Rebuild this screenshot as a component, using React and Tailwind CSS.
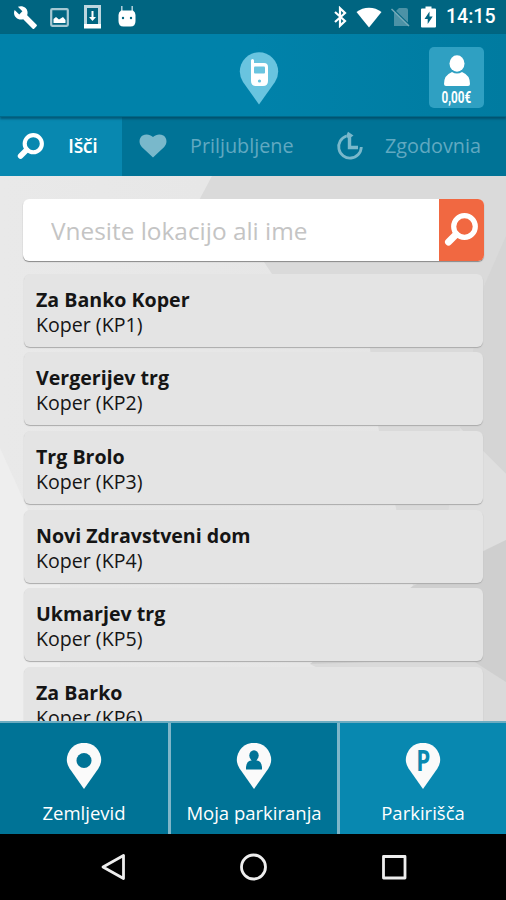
import React, { useState } from "react";

const places = [
  { name: "Za Banko Koper", zone: "Koper (KP1)" },
  { name: "Vergerijev trg", zone: "Koper (KP2)" },
  { name: "Trg Brolo", zone: "Koper (KP3)" },
  { name: "Novi Zdravstveni dom", zone: "Koper (KP4)" },
  { name: "Ukmarjev trg", zone: "Koper (KP5)" },
  { name: "Za Barko", zone: "Koper (KP6)" },
];

const SearchIcon = ({ className }) => (
  <svg className={className} viewBox="0 0 34 34" fill="none" stroke="currentColor">
    <circle cx="20.5" cy="13.5" r="10.8" strokeWidth="5.2" />
    <path d="M12 21.5 4.5 29" strokeWidth="7" strokeLinecap="round" />
  </svg>
);

const HeartIcon = () => (
  <svg className="w-[28px] h-[24px]" viewBox="0 0 28 24" fill="currentColor">
    <path d="M14 23.5 2.8 13C-.8 9 .2 3.5 3.6 1.5 7-.4 11 .2 14 3 17 .2 21-.4 24.4 1.5 27.8 3.5 28.8 9 25.2 13Z" />
  </svg>
);

const HistoryIcon = () => (
  <svg className="w-[28px] h-[30px]" viewBox="0 0 28 30" fill="none" stroke="currentColor">
    <path d="M10.5 5A11.3 11.3 0 1 0 25.3 16" strokeWidth="2.8" />
    <path d="M13.5 5v11.500h8.500" strokeWidth="3.4" />
    <path d="M12 .8l5.500 3.700-5 3.500-2.500-3z" fill="currentColor" stroke="none" />
  </svg>
);

const Pin = ({ children }) => (
  <svg className="w-[36px] h-[46px]" viewBox="0 0 36 46">
    <path
      d="M18 46 3.6 25.5A16.5 16.5 0 0 1 .8 17a17.200 17.200 0 0 1 34.400 0 16.500 16.500 0 0 1-2.800 8.500Z"
      fill="#fafafa"
    />
    {children}
  </svg>
);

const StatusBar = () => (
  <div className="h-[34px] shrink-0 bg-[#006581] text-white flex items-center justify-between pl-[13px] pr-[11px]">
    <div className="flex items-center">
      <svg className="w-[25px] h-[25px]" viewBox="0 0 24 24" fill="currentColor">
        <path d="M22.700 19l-9.100-9.100c.9-2.300.4-5-1.500-6.900-2-2-5-2.400-7.400-1.300L9 6 6 9 1.600 4.700C.4 7.100.9 10.100 2.900 12.100c1.900 1.900 4.600 2.400 6.900 1.500l9.100 9.100c.4.4 1 .4 1.400 0l2.300-2.300c.5-.4.5-1.100.1-1.400z" />
      </svg>
      <svg className="w-[19px] h-[19px] ml-[12px]" viewBox="0 0 19 19">
        <rect x="1.2" y="1.2" width="16.6" height="16.6" rx="1" fill="none" stroke="#a5c8d3" strokeWidth="2.2" />
        <path d="M3.500 15v-4l2.500-2 3 2.500 4-2.500 2.500 3v3z" fill="#fff" />
      </svg>
      <svg className="w-[17px] h-[24px] ml-[15px]" viewBox="0 0 17 24">
        <path d="M1.500 20V1.500h14V20" fill="none" stroke="#bcd6df" strokeWidth="3" />
        <rect y="19" width="17" height="4.5" fill="#fff" />
        <path d="M7.500 6h2v6H12l-3.500 4L5 12h2.500z" fill="#fff" />
      </svg>
      <svg className="w-[18px] h-[22px] ml-[17px]" viewBox="0 0 18 22">
        <path d="M3.800 0v6M14.200 0v6" stroke="#b5d2dc" strokeWidth="1.5" />
        <path d="M3 4.500h12Q17.500 6 17.500 9v6q0 5.500-5 5.500h-7q-5 0-5-5.500V9Q.5 6 3 4.500Z" fill="#fff" />
        <circle cx="5" cy="12" r="1.2" fill="#006581" />
        <circle cx="13" cy="12" r="1.2" fill="#006581" />
      </svg>
    </div>
    <div className="flex items-center">
      <svg className="w-[14px] h-[22px]" viewBox="0 0 14 22" fill="none" stroke="#fff" strokeWidth="2.2">
        <path d="M2 6l10 9-5 4.800V2.200L12 7 2 16" />
      </svg>
      <svg className="w-[26px] h-[21px] ml-[9px]" viewBox="0 0 26 21">
        <path d="M13 20.500.5 5Q6 .7 13 .7T25.500 5Z" fill="#fff" />
      </svg>
      <svg className="w-[19px] h-[21px] ml-[9px]" viewBox="0 0 19 21">
        <path d="M8 1h7q2 0 2 2v16H3V6Z" fill="#4c92a6" />
        <path d="M1.500 1.500 19 18.500" stroke="#006581" strokeWidth="1.5" />
        <path d="M.5 2 18 19" stroke="#75aab9" strokeWidth="1.5" />
      </svg>
      <svg className="w-[15px] h-[22px] ml-[11px] mr-[1px]" viewBox="0 0 15 22">
        <path d="M4.500.5h6v2H14q1 0 1 1V20.500q0 1-1 1H1q-1 0-1-1V3.500q0-1 1-1h3.500z" fill="#fff" />
        <path d="M8.500 5.500 3.500 13h3.200v5l5-7.500H8.500z" fill="#006581" />
      </svg>
      <span className="w-[49px] ml-[9px] font-[Roboto,sans-serif] font-medium text-[19.5px] leading-none whitespace-nowrap">
        14:15
      </span>
    </div>
  </div>
);

const Header = () => (
  <header className="h-[83px] shrink-0 bg-gradient-to-r from-[#0082aa] via-[#0082aa] to-[#007ba0] border-b border-[#00698a] grid grid-cols-[1fr_40px_1fr] items-center pl-[11px] relative z-10 shadow-[0_2px_2px_rgba(0,60,85,0.6)]">
    <span />
    <svg className="w-[40px] h-[54px] mt-[8px]" viewBox="0 0 40 54">
      <path
        d="M20 52.500 4 30A19.500 19.500 0 0 1 .8 19.500a19.200 19.200 0 0 1 38.400 0A19.500 19.500 0 0 1 36 30Z"
        fill="#69c4df"
      />
      <path d="M12 8.500q0-1.500 1.500-1.500t1.500 1.500V11h10q4 0 4 4v14q0 5-5 5h-7q-5 0-5-5z" fill="#fff" />
      <rect x="15" y="14.5" width="11" height="7" rx="1" fill="#69c4df" />
      <circle cx="20.5" cy="29" r="1.6" fill="#69c4df" />
    </svg>
    <button className="justify-self-end mr-[22px] w-[55px] h-[61px] mt-[5px] rounded-[5px] bg-[#2fa0c2] flex flex-col items-center pt-[8px] text-white">
      <svg className="w-[26px] h-[32px] shrink-0" viewBox="0 0 26 32" fill="currentColor">
        <ellipse cx="13" cy="8.5" rx="7.5" ry="8.3" />
        <path d="M8 17q5 3 10 0 8 3 8 12 0 2-2 2H2q-2 0-2-2 0-9 8-12Z" />
      </svg>
      <span className="font-[Roboto,sans-serif] font-bold text-[16px] leading-[16px] mt-[3px] scale-x-[0.73] whitespace-nowrap">
        0,00€
      </span>
    </button>
  </header>
);

// faceted grey background behind the list
const Backdrop = () => (
  <svg className="absolute inset-0 w-full h-full" viewBox="0 0 506 545" preserveAspectRatio="none">
    <defs>
      <linearGradient id="shade" x1="0" x2="1" y1="0" y2="0">
        <stop offset="0" stopColor="#e9e9e9" />
        <stop offset="1" stopColor="#e4e4e4" />
      </linearGradient>
    </defs>
    <path d="M0 0h506v545H0z" fill="url(#shade)" />
    <path d="M0 272 24 325 60 400V545H0Z" fill="#eeeeee" />
    <path d="M212 0H506V545H420L310 488 413 410 378 250 370 172 272 98 264 86 196 30Z" fill="#dadada" />
    <path d="M506 60v238L460 252 484 110Z" fill="#d5d5d5" />
    <path d="M460 252l46 46v66L440 395Z" fill="#dfdfdf" />
    <path d="M506 364v142L470 483 310 488 413 410Z" fill="#cfcfcf" />
  </svg>
);

const App = () => {
  const [query, setQuery] = useState("");

  return (
    <div className="w-[506px] h-[900px] overflow-hidden flex flex-col font-['Open_Sans',sans-serif]">
      <StatusBar />
      <Header />

      <nav className="h-[59px] shrink-0 bg-[#007396] flex text-[19.8px] text-[#79b8cb]">
        <button className="w-[122px] bg-[#0888b0] text-white flex items-center pl-[17px] pb-[1px]">
          <SearchIcon className="w-[27px] h-[27px] shrink-0" />
          <span className="ml-[24px] font-semibold tracking-[-0.4px]">Išči</span>
        </button>
        <button className="w-[194px] flex items-center pl-[17px] pb-[2px]">
          <HeartIcon />
          <span className="ml-[23px] text-[#61a9c1]">Priljubljene</span>
        </button>
        <button className="flex-1 flex items-center pl-[20px] pb-[2px]">
          <HistoryIcon />
          <span className="ml-[21px] text-[#61a9c1]">Zgodovnia</span>
        </button>
      </nav>

      <main className="flex-1 min-h-0 relative overflow-hidden">
        <Backdrop />
        <div className="relative pt-[23px] pl-[23px] pr-[22px]">
          <form
            className="h-[62px] flex rounded-[6px] overflow-hidden bg-white shadow-[0_1px_1px_#888]"
            onSubmit={(e) => e.preventDefault()}
          >
            <input
              className="flex-1 min-w-0 pl-[28px] pt-[2px] text-[24.4px] text-gray-700 outline-none placeholder:text-[#c4c4c4]"
              type="text"
              placeholder="Vnesite lokacijo ali ime"
              value={query}
              onChange={(e) => setQuery(e.target.value)}
            />
            <button type="submit" className="w-[45px] bg-[#f16841] text-white flex items-center justify-center pr-[1px]">
              <SearchIcon className="w-[34px] h-[34px]" />
            </button>
          </form>

          <ul className="mt-[12.6px] mx-[1px] flex flex-col gap-[5.7px]">
            {places.map((place) => (
              <li
                key={place.zone}
                className="h-[73px] shrink-0 rounded-[6px] bg-[#e4e4e4] shadow-[0_1px_1px_#aaa] pl-[12px] pt-[13px] text-[19.6px] leading-[25px] text-[#151515]"
              >
                <div className="font-bold">{place.name}</div>
                <div>{place.zone}</div>
              </li>
            ))}
          </ul>
        </div>
      </main>

      <footer className="h-[113px] shrink-0 border-t-2 border-[#6cacc1] bg-[#007396] grid grid-cols-[168px_169px_1fr] text-[18.5px] leading-[26px] text-white">
        <button className="flex flex-col items-center pt-[20px]">
          <Pin>
            <circle cx="18" cy="17.5" r="7.5" fill="#007396" />
          </Pin>
          <span className="mt-[11px]">Zemljevid</span>
        </button>
        <button className="border-l-[3px] border-[#7fb6c9] flex flex-col items-center pt-[20px]">
          <Pin>
            <ellipse cx="18" cy="12.5" rx="4.7" ry="5.2" fill="#007396" />
            <path d="M15.500 15h5v2.500q5 .5 5.500 6.500v2.500H10V24q.5-6 5.500-6.500Z" fill="#007396" />
          </Pin>
          <span className="mt-[11px] whitespace-nowrap">Moja parkiranja</span>
        </button>
        <button className="border-l-[3px] border-[#7fb6c9] bg-[#0888b0] flex flex-col items-center pt-[20px]">
          <Pin>
            <text
              x="18"
              y="28"
              textAnchor="middle"
              fontFamily="Open Sans"
              fontWeight="700"
              fontSize="28"
              fill="#0888b0"
              transform="translate(4 0) scale(.8 1)"
            >
              P
            </text>
          </Pin>
          <span className="mt-[11px]">Parkirišča</span>
        </button>
      </footer>

      <div className="h-[66px] shrink-0 bg-black">
        <svg className="w-full h-full" viewBox="0 0 506 66" fill="none" stroke="#eee" strokeWidth="2.8" strokeLinejoin="round">
          <path d="M123.500 21.500v23L103 33z" />
          <circle cx="253.5" cy="33" r="12" />
          <rect x="383.5" y="22.5" width="21.5" height="21.5" />
        </svg>
      </div>
    </div>
  );
};

export default App;
